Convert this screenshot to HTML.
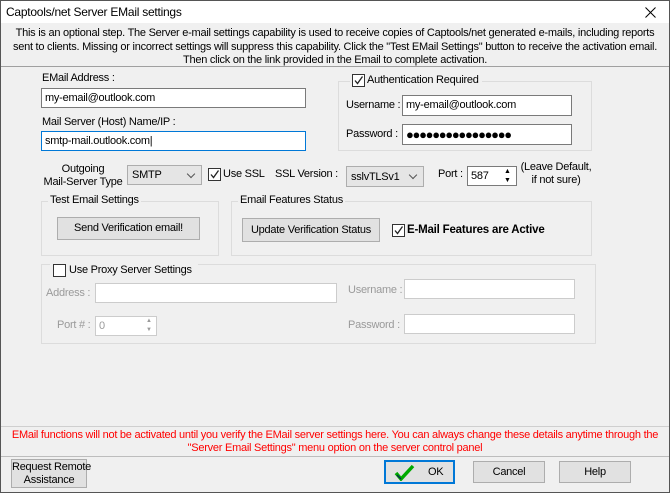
<!DOCTYPE html>
<html><head><meta charset="utf-8"><style>
*{box-sizing:border-box;margin:0;padding:0}
body{width:670px;height:493px;overflow:hidden;background:#f0f0f0;font-family:"Liberation Sans",sans-serif;font-size:11px;letter-spacing:-0.25px;color:#000;position:relative}
.a{position:absolute;white-space:nowrap}
.frame{position:absolute;left:0;top:0;width:670px;height:493px;border:1px solid #555}
.title{position:absolute;left:1px;top:1px;width:668px;height:22px;background:#fff}
.inp{position:absolute;background:#fff;border:1px solid #7a7a7a;padding:3px 3px;line-height:13px;white-space:nowrap;overflow:hidden}
.dis{border-color:#ccc}
.btn{position:absolute;background:#e1e1e1;border:1px solid #adadad;text-align:center;line-height:20px;white-space:nowrap}
.grp{position:absolute;border:1px solid #dcdcdc}
.cb{position:absolute;width:13px;height:13px;border:1px solid #333;background:#fff}
.cb svg{position:absolute;left:0;top:0}
.sel{position:absolute;background:#e5e5e5;border:1px solid #adadad;padding:3px 4px;line-height:13px;white-space:nowrap}
.sel:after{content:"";position:absolute;right:7px;top:5px;width:5px;height:5px;border-right:1px solid #555;border-bottom:1px solid #555;transform:rotate(45deg)}
.hr{position:absolute;left:1px;width:668px;height:1px;background:#a0a0a0}
.gl{color:#9a9a9a}
</style></head><body>
<div class="title"></div>
<div class="a" style="left:6px;top:5px;font-size:12px">Captools/net Server EMail settings</div>
<svg class="a" style="left:645px;top:7px" width="11" height="11"><path d="M0.5 0.5l10 10M10.5 0.5l-10 10" stroke="#000" stroke-width="1"/></svg>
<div class="a" style="left:1px;top:27px;width:668px;text-align:center;line-height:13.5px">This is an optional step. The Server e-mail settings capability is used to receive copies of Captools/net generated e-mails, including reports<br>sent to clients. Missing or incorrect settings will suppress this capability. Click the "Test EMail Settings" button to receive the activation email.<br>Then click on the link provided in the Email to complete activation.</div>
<div class="hr" style="top:66px"></div>

<div class="a" style="left:42px;top:72px">EMail Address :</div>
<div class="inp" style="left:41px;top:88px;width:265px;height:20px">my-email@outlook.com</div>
<div class="a" style="left:42px;top:116px">Mail Server (Host) Name/IP :</div>
<div class="inp" style="left:41px;top:131px;width:265px;height:20px;border-color:#0078d7">smtp-mail.outlook.com|</div>

<div class="grp" style="left:338px;top:81px;width:254px;height:70px"></div>
<div class="a" style="left:350px;top:73px;width:132px;height:16px;background:#f0f0f0"></div>
<div class="cb" style="left:352px;top:74px"><svg width="11" height="11"><path d="M2 5.5l2.5 3 5-7" stroke="#222" stroke-width="1.3" fill="none"/></svg></div>
<div class="a" style="left:367px;top:74px">Authentication Required</div>
<div class="a" style="left:346px;top:99px">Username :</div>
<div class="inp" style="left:402px;top:95px;width:170px;height:21px">my-email@outlook.com</div>
<div class="a" style="left:346px;top:128px">Password :</div>
<div class="inp" style="left:402px;top:124px;width:170px;height:21px;font-size:13px;letter-spacing:-1.3px;line-height:14px">●●●●●●●●●●●●●●●●</div>

<div class="a" style="left:38px;top:163px;width:90px;text-align:center;line-height:13px">Outgoing<br>Mail-Server Type</div>
<div class="sel" style="left:127px;top:165px;width:75px;height:20px">SMTP</div>
<div class="cb" style="left:208px;top:168px"><svg width="11" height="11"><path d="M2 5.5l2.5 3 5-7" stroke="#222" stroke-width="1.3" fill="none"/></svg></div>
<div class="a" style="left:223px;top:168px">Use SSL</div>
<div class="a" style="left:275px;top:168px">SSL Version :</div>
<div class="sel" style="left:346px;top:166px;width:78px;height:21px;padding-top:4px">sslvTLSv1</div>
<div class="a" style="left:438px;top:168px">Port :</div>
<div class="inp" style="left:467px;top:166px;width:50px;height:20px">587</div>
<div class="a" style="left:504px;top:167px;font-size:7px;line-height:9px">▲<br>▼</div>
<div class="a" style="left:518px;top:161px;width:76px;line-height:13px;text-align:center">(Leave Default,<br>if not sure)</div>

<div class="grp" style="left:41px;top:201px;width:178px;height:55px"></div>
<div class="a" style="left:48px;top:194px;background:#f0f0f0;padding:0 2px">Test Email Settings</div>
<div class="btn" style="left:57px;top:217px;width:143px;height:23px">Send Verification email!</div>
<div class="grp" style="left:231px;top:201px;width:361px;height:55px"></div>
<div class="a" style="left:238px;top:194px;background:#f0f0f0;padding:0 2px">Email Features Status</div>
<div class="btn" style="left:242px;top:218px;width:138px;height:24px;line-height:22px">Update Verification Status</div>
<div class="cb" style="left:392px;top:224px"><svg width="11" height="11"><path d="M2 5.5l2.5 3 5-7" stroke="#222" stroke-width="1.3" fill="none"/></svg></div>
<div class="a" style="left:407px;top:224px;font-weight:bold;font-size:11.5px;letter-spacing:-0.2px">E-Mail Features are Active</div>

<div class="grp" style="left:41px;top:264px;width:555px;height:80px"></div>
<div class="a" style="left:50px;top:262px;width:148px;height:16px;background:#f0f0f0"></div>
<div class="cb" style="left:53px;top:264px"></div>
<div class="a" style="left:69px;top:264px">Use Proxy Server Settings</div>
<div class="a gl" style="left:46px;top:287px">Address :</div>
<div class="inp dis" style="left:95px;top:283px;width:242px;height:20px"></div>
<div class="a gl" style="left:348px;top:284px">Username :</div>
<div class="inp dis" style="left:404px;top:279px;width:171px;height:20px"></div>
<div class="a gl" style="left:57px;top:319px">Port # :</div>
<div class="inp dis gl" style="left:95px;top:316px;width:62px;height:20px">0</div>
<div class="a gl" style="left:146px;top:317px;font-size:6px;line-height:9px">▲<br>▼</div>
<div class="a gl" style="left:348px;top:319px">Password :</div>
<div class="inp dis" style="left:404px;top:314px;width:171px;height:20px"></div>

<div class="hr" style="top:426px;background:#cfcfcf"></div>
<div class="a" style="left:1px;top:429px;width:668px;text-align:center;color:#f00;line-height:13px">EMail functions will not be activated until you verify the EMail server settings here. You can always change these details anytime through the<br>"Server Email Settings" menu option on the server control panel</div>
<div class="hr" style="top:456px;background:#bdbdbd"></div>

<div class="btn" style="left:11px;top:459px;width:76px;height:29px;line-height:13px;padding-top:1px">Request Remote<br>Assistance</div>
<div class="btn" style="left:384px;top:460px;width:71px;height:24px;border:2px solid #0078d7;line-height:20px"><svg style="position:absolute;left:8px;top:2px" width="22" height="17"><path d="M2 9l5 6 12-13" stroke="#0a0" stroke-width="3.5" fill="none"/><path d="M3 11l4 4" stroke="#116" stroke-width="1.2"/></svg><span style="position:absolute;left:42px;top:0">OK</span></div>
<div class="btn" style="left:473px;top:461px;width:72px;height:22px">Cancel</div>
<div class="btn" style="left:559px;top:461px;width:72px;height:22px">Help</div>
<div class="frame"></div>
</body></html>
